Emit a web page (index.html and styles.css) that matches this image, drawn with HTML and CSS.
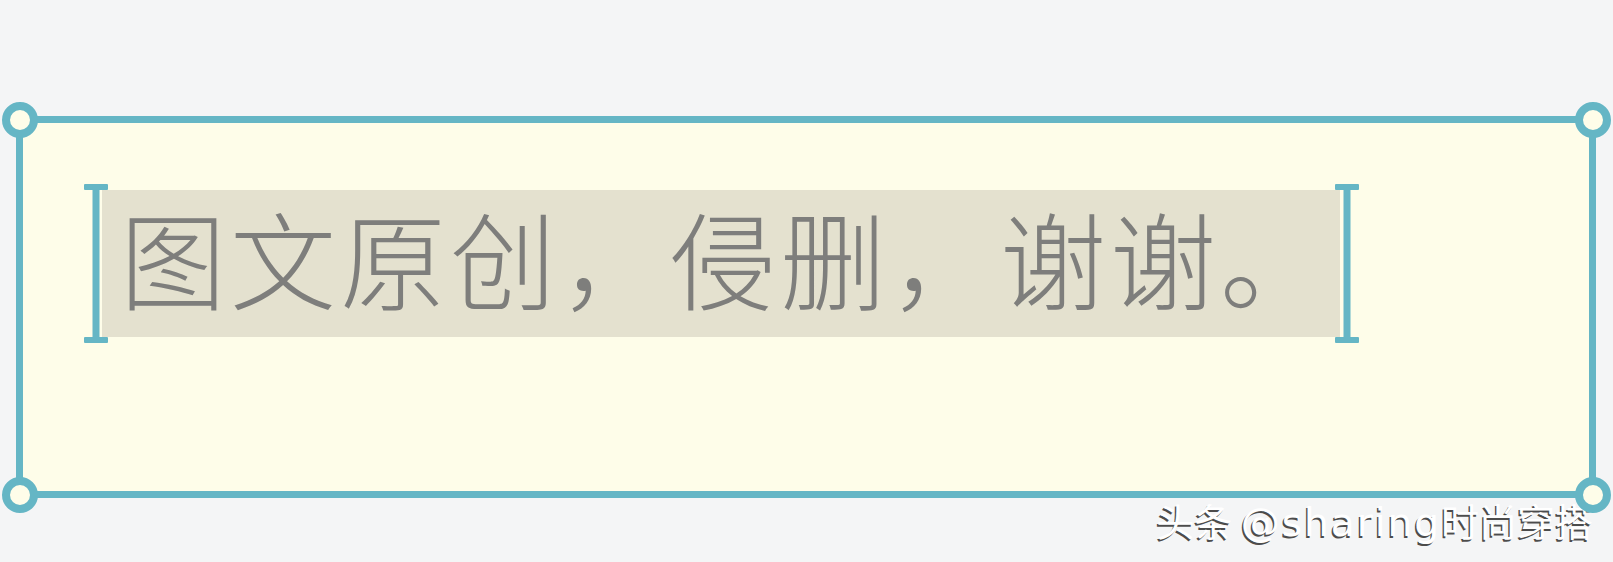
FILE: index.html
```html
<!DOCTYPE html>
<html lang="zh-CN">
<head>
<meta charset="utf-8">
<title>图文原创</title>
<link rel="stylesheet" href="styles.css">
</head>
<body>
<div class="page">
  <div class="frame">
    <span class="handle tl"></span>
    <span class="handle tr"></span>
    <span class="handle bl"></span>
    <span class="handle br"></span>
    <div class="sel">
      <svg class="caret" width="24" height="159" viewBox="0 0 24 159" aria-hidden="true">
        <rect x="0" y="0" width="24" height="6" rx="1" fill="#65b6c5"/>
        <rect x="8.5" y="0" width="7" height="159" fill="#65b6c5"/>
        <rect x="0" y="153" width="24" height="6" rx="1" fill="#65b6c5"/>
      </svg>
      <div class="hl">图文原创，侵删，谢谢。</div>
      <svg class="caret caret-r" width="24" height="159" viewBox="0 0 24 159" aria-hidden="true">
        <rect x="0" y="0" width="24" height="6" rx="1" fill="#65b6c5"/>
        <rect x="8.5" y="0" width="7" height="159" fill="#65b6c5"/>
        <rect x="0" y="153" width="24" height="6" rx="1" fill="#65b6c5"/>
      </svg>
    </div>
  </div>
  <div class="mark">头条 <span class="latin">@sharing</span>时尚穿搭</div>
</div>
</body>
</html>
```

FILE: styles.css
```css
html, body {
  margin: 0;
  padding: 0;
}
body {
  background: #f4f5f6;
  width: 1613px;
  height: 562px;
  overflow: hidden;
  font-family: "Noto Sans CJK SC", "Noto Sans", sans-serif;
}
.page {
  padding: 116px 0 0 16px;
}
.frame {
  position: relative;
  box-sizing: border-box;
  width: 1580px;
  height: 382px;
  border: 7px solid #65b6c5;
  background: #fefde9;
  padding: 61px 0 0 61px;
}
.handle {
  position: absolute;
  width: 20px;
  height: 20px;
  border: 8px solid #65b6c5;
  border-radius: 50%;
  background: #fefde9;
  box-sizing: content-box;
  z-index: 2;
}
.handle.tl { left: -21.5px; top: -21.5px; }
.handle.tr { right: -21.5px; top: -21.5px; }
.handle.bl { left: -21.5px; bottom: -21.5px; }
.handle.br { right: -21.5px; bottom: -21.5px; }
.sel {
  display: flex;
  align-items: center;
}
.caret {
  position: relative;
  z-index: 1;
  flex: none;
  display: block;
}
.hl {
  margin-left: -6px;
  margin-right: -5px;
  height: 147px;
  box-sizing: border-box;
  padding: 0 10px 0 18px;
  background: #e4e1cf;
  color: #7e7e7c;
  font-size: 106px;
  font-weight: 300;
  letter-spacing: 4px;
  line-height: 133px;
  white-space: nowrap;
}
.mark {
  width: 1577px;
  text-align: right;
  margin-top: 3px;
  font-size: 38px;
  font-weight: 400;
  line-height: 1;
  color: #ffffff;
  text-shadow: -1.5px 1.5px 0.5px rgba(20, 20, 20, 0.75);
  white-space: nowrap;
}
.mark .latin {
  font-family: "DejaVu Sans", "Liberation Sans", sans-serif;
  font-weight: 400;
  font-size: 39px;
  letter-spacing: 2px;
}
```
